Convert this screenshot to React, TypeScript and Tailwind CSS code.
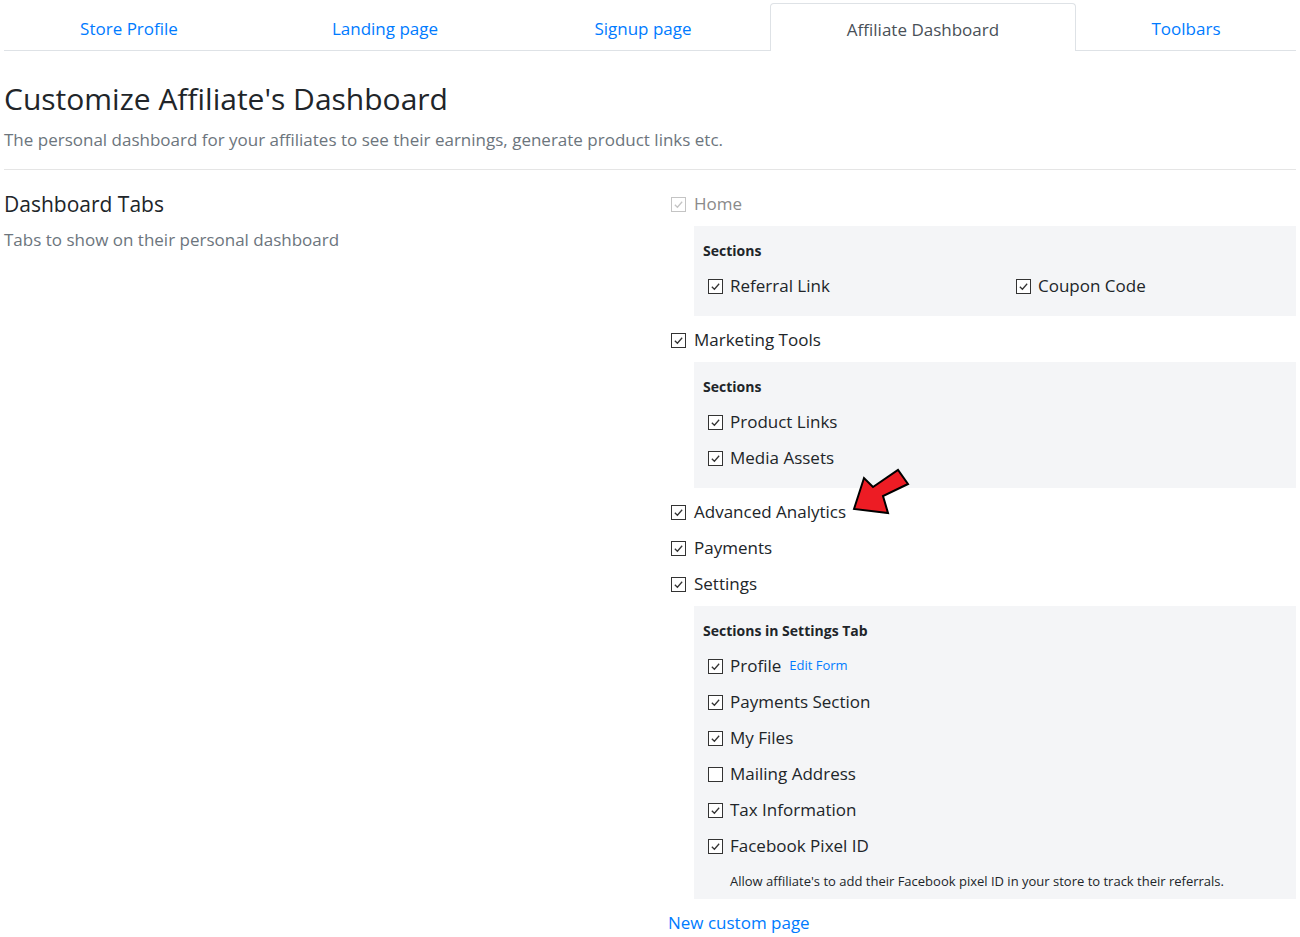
import React from "react";

const tabs = [
  { label: "Store Profile", w: "w-[250px]" },
  { label: "Landing page", w: "w-[262px]" },
  { label: "Signup page", w: "w-[254px]" },
  { label: "Affiliate Dashboard", w: "w-[306px]", active: true },
  { label: "Toolbars", w: "w-[220px]" },
];

function Box({ checked = true, disabled = false }: { checked?: boolean; disabled?: boolean }) {
  return (
    <span
      className={
        "flex h-[15px] w-[15px] shrink-0 items-center justify-center border bg-white " +
        (disabled ? "border-[#c4c4c4]" : "border-[#333]")
      }
    >
      {checked && (
        <svg viewBox="0 0 12 12" className="h-[11px] w-[11px]">
          <path
            d="M2 6.2 L4.8 9 L10 3"
            fill="none"
            stroke={disabled ? "#c4c4c4" : "#333"}
            strokeWidth="1.4"
          />
        </svg>
      )}
    </span>
  );
}

function Row({
  label,
  checked = true,
  disabled = false,
  children,
}: {
  label: string;
  checked?: boolean;
  disabled?: boolean;
  children?: React.ReactNode;
}) {
  return (
    <label className="relative flex h-9 items-center gap-[8px] pl-1">
      <Box checked={checked} disabled={disabled} />
      <span className={disabled ? "text-[#8a8a8a]" : "text-[#212529]"}>{label}</span>
      {children}
    </label>
  );
}

function SubRow({ label, checked = true, children }: { label: string; checked?: boolean; children?: React.ReactNode }) {
  return (
    <label className="flex h-9 items-center gap-[7px] pl-[5px]">
      <Box checked={checked} />
      <span className="text-[#212529]">{label}</span>
      {children}
    </label>
  );
}

function Panel({ title, children, className = "" }: { title: string; children: React.ReactNode; className?: string }) {
  return (
    <div className={"ml-[27px] bg-[#f4f5f7] pl-[9px] pt-[15px] " + className}>
      <div className="mb-[7px] h-5 text-[14px] font-bold leading-5 text-[#212529]">{title}</div>
      {children}
    </div>
  );
}

export default function App() {
  return (
    <div className="min-h-[937px] bg-white px-1 font-['Open_Sans',sans-serif] text-[17px] text-[#212529]">
      {/* Tabs */}
      <nav className="mt-[3px] flex border-b border-[#dee2e6]">
        {tabs.map((t) =>
          t.active ? (
            <div
              key={t.label}
              className={`${t.w} -mb-px flex h-[48px] items-center justify-center rounded-t border border-b-0 border-[#dee2e6] bg-white pt-[4px] text-[#495057]`}
            >
              {t.label}
            </div>
          ) : (
            <a key={t.label} className={`${t.w} flex h-[47px] items-center justify-center pt-[5px] text-[#007bff]`}>
              {t.label}
            </a>
          )
        )}
      </nav>

      {/* Header */}
      <h1 className="mt-[29px] text-[30px] leading-[38px] text-[#212529]">Customize Affiliate's Dashboard</h1>
      <p className="mt-2 leading-[27px] text-[#6c757d]">
        The personal dashboard for your affiliates to see their earnings, generate product links etc.
      </p>
      <hr className="mt-4 border-[#e5e5e5]" />

      {/* Dashboard tabs */}
      <div className="mt-[14px] flex">
        <div className="w-[663px]">
          <h2 className="mt-[7px] text-[21px] leading-[26px]">Dashboard Tabs</h2>
          <p className="mt-[9px] leading-[27px] text-[#6c757d]">Tabs to show on their personal dashboard</p>
        </div>

        <div className="flex-1 pt-[2px]">
          <Row label="Home" disabled />
          <Panel title="Sections" className="mb-[6px] mt-1 pb-3">
            <div className="flex">
              <div className="w-[308px]">
                <SubRow label="Referral Link" />
              </div>
              <SubRow label="Coupon Code" />
            </div>
          </Panel>

          <Row label="Marketing Tools" />
          <Panel title="Sections" className="mb-[6px] mt-1 pb-3">
            <SubRow label="Product Links" />
            <SubRow label="Media Assets" />
          </Panel>

          <Row label="Advanced Analytics">
            <svg
              className="absolute left-[184px] top-[-26px] h-[48px] w-[60px]"
              viewBox="0 0 60 48"
            >
              <polygon
                points="3,41 13,10 22,19 47,2 57,16 32,28 37,45"
                fill="#ed1c24"
                stroke="#000"
                strokeWidth="2"
                strokeLinejoin="miter"
              />
            </svg>
          </Row>
          <Row label="Payments" />
          <Row label="Settings" />
          <Panel title="Sections in Settings Tab" className="mt-1 pb-2">
            <SubRow label="Profile">
              <a className="ml-[1px] text-[13px] text-[#007bff]">Edit Form</a>
            </SubRow>
            <SubRow label="Payments Section" />
            <SubRow label="My Files" />
            <SubRow label="Mailing Address" checked={false} />
            <SubRow label="Tax Information" />
            <SubRow label="Facebook Pixel ID" />
            <p className="mt-[7px] pl-[27px] text-[13px] leading-5 text-[#212529]">
              Allow affiliate's to add their Facebook pixel ID in your store to track their referrals.
            </p>
          </Panel>

          <a className="mt-[6px] flex h-9 items-center pl-[1px] text-[#007bff]">New custom page</a>
        </div>
      </div>
    </div>
  );
}
